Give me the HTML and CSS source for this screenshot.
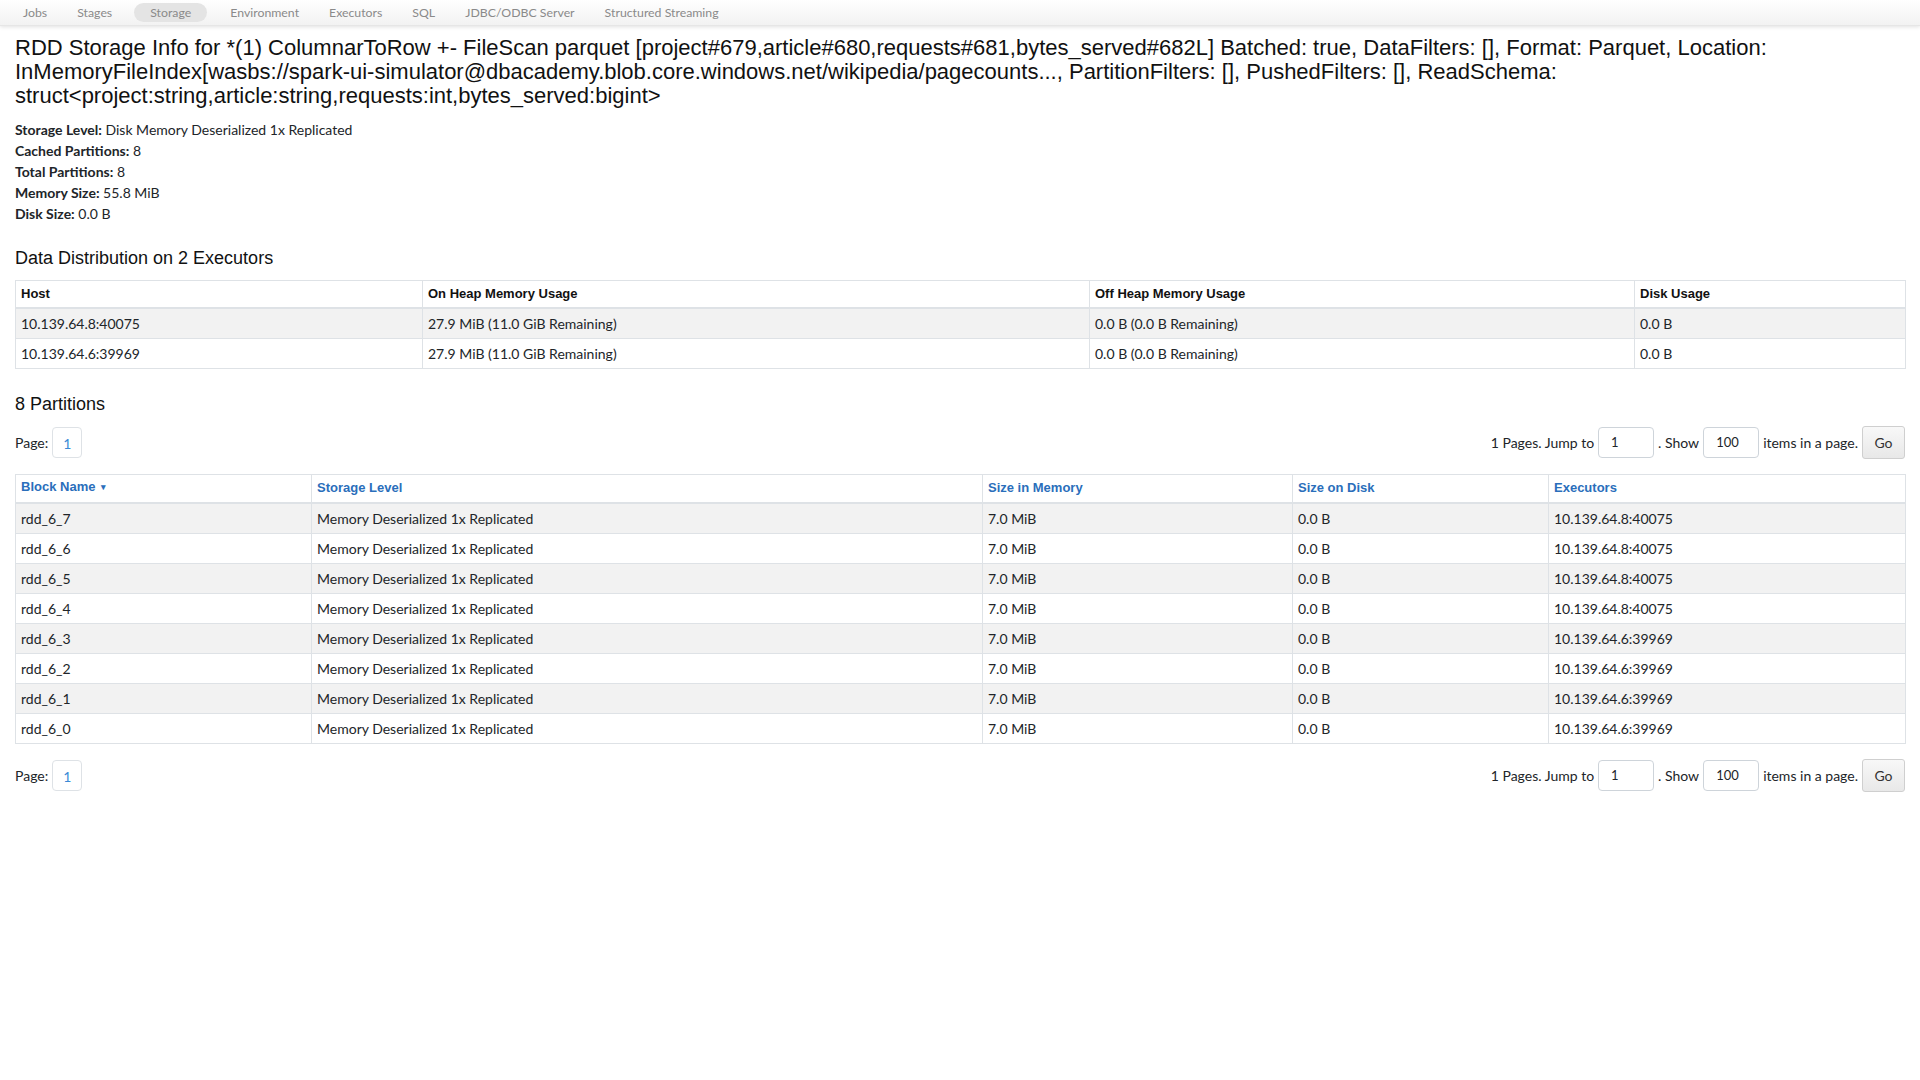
FILE: index.html
```html
<!DOCTYPE html>
<html>
<head>
<meta charset="utf-8">
<title>Storage</title>
<link rel="stylesheet" href="styles.css">
</head>
<body>
<nav class="navbar">
  <ul class="nav">
    <li class="nav-item">Jobs</li>
    <li class="nav-item">Stages</li>
    <li class="nav-item active">Storage</li>
    <li class="nav-item">Environment</li>
    <li class="nav-item">Executors</li>
    <li class="nav-item">SQL</li>
    <li class="nav-item">JDBC/ODBC Server</li>
    <li class="nav-item">Structured Streaming</li>
  </ul>
</nav>
<main class="container">
  <h3 class="title">RDD Storage Info for *(1) ColumnarToRow +- FileScan parquet [project#679,article#680,requests#681,bytes_served#682L] Batched: true, DataFilters: [], Format: Parquet, Location: InMemoryFileIndex[wasbs://spark-ui-simulator@dbacademy.blob.core.windows.net/wikipedia/pagecounts..., PartitionFilters: [], PushedFilters: [], ReadSchema: struct&lt;project:string,article:string,requests:int,bytes_served:bigint&gt;</h3>

  <ul class="summary">
    <li><strong>Storage Level:</strong> Disk Memory Deserialized 1x Replicated</li>
    <li><strong>Cached Partitions:</strong> 8</li>
    <li><strong>Total Partitions:</strong> 8</li>
    <li><strong>Memory Size:</strong> 55.8 MiB</li>
    <li><strong>Disk Size:</strong> 0.0 B</li>
  </ul>

  <h4 class="section-title">Data Distribution on 2 Executors</h4>
  <table class="table">
    <colgroup>
      <col class="w-host"><col class="w-onheap"><col class="w-offheap"><col class="w-disk">
    </colgroup>
    <thead>
      <tr><th>Host</th><th>On Heap Memory Usage</th><th>Off Heap Memory Usage</th><th>Disk Usage</th></tr>
    </thead>
    <tbody>
      <tr><td>10.139.64.8:40075</td><td>27.9 MiB (11.0 GiB Remaining)</td><td>0.0 B (0.0 B Remaining)</td><td>0.0 B</td></tr>
      <tr><td>10.139.64.6:39969</td><td>27.9 MiB (11.0 GiB Remaining)</td><td>0.0 B (0.0 B Remaining)</td><td>0.0 B</td></tr>
    </tbody>
  </table>

  <h4 class="section-title partitions-title">8 Partitions</h4>
  <div class="pager">
    <div class="pager-left"><span class="pager-label">Page:</span><span class="page-box">1</span></div>
    <div class="pager-right">
      <span>1 Pages. Jump to</span><span class="pager-input">1</span><span>. Show</span><span class="pager-input">100</span><span>items in a page.</span><span class="go-btn">Go</span>
    </div>
  </div>

  <table class="table blocks">
    <colgroup>
      <col class="w-b1"><col class="w-b2"><col class="w-b3"><col class="w-b4"><col class="w-b5">
    </colgroup>
    <thead>
      <tr><th><span class="link">Block Name <span class="caret">&#9662;</span></span></th><th><span class="link">Storage Level</span></th><th><span class="link">Size in Memory</span></th><th><span class="link">Size on Disk</span></th><th><span class="link">Executors</span></th></tr>
    </thead>
    <tbody>
      <tr><td>rdd_6_7</td><td>Memory Deserialized 1x Replicated</td><td>7.0 MiB</td><td>0.0 B</td><td>10.139.64.8:40075</td></tr>
      <tr><td>rdd_6_6</td><td>Memory Deserialized 1x Replicated</td><td>7.0 MiB</td><td>0.0 B</td><td>10.139.64.8:40075</td></tr>
      <tr><td>rdd_6_5</td><td>Memory Deserialized 1x Replicated</td><td>7.0 MiB</td><td>0.0 B</td><td>10.139.64.8:40075</td></tr>
      <tr><td>rdd_6_4</td><td>Memory Deserialized 1x Replicated</td><td>7.0 MiB</td><td>0.0 B</td><td>10.139.64.8:40075</td></tr>
      <tr><td>rdd_6_3</td><td>Memory Deserialized 1x Replicated</td><td>7.0 MiB</td><td>0.0 B</td><td>10.139.64.6:39969</td></tr>
      <tr><td>rdd_6_2</td><td>Memory Deserialized 1x Replicated</td><td>7.0 MiB</td><td>0.0 B</td><td>10.139.64.6:39969</td></tr>
      <tr><td>rdd_6_1</td><td>Memory Deserialized 1x Replicated</td><td>7.0 MiB</td><td>0.0 B</td><td>10.139.64.6:39969</td></tr>
      <tr><td>rdd_6_0</td><td>Memory Deserialized 1x Replicated</td><td>7.0 MiB</td><td>0.0 B</td><td>10.139.64.6:39969</td></tr>
    </tbody>
  </table>

  <div class="pager pager-bottom">
    <div class="pager-left"><span class="pager-label">Page:</span><span class="page-box">1</span></div>
    <div class="pager-right">
      <span>1 Pages. Jump to</span><span class="pager-input">1</span><span>. Show</span><span class="pager-input">100</span><span>items in a page.</span><span class="go-btn">Go</span>
    </div>
  </div>
</main>
</body>
</html>
```
FILE: styles.css
```css
* { box-sizing: border-box; }
html, body { margin: 0; padding: 0; background: #fff; }
body {
  font-family: Lato, "Open Sans", sans-serif;
  font-size: 14px;
  color: #212529;
}
.navbar {
  height: 26px;
  background: linear-gradient(#ffffff, #f2f2f2);
  box-shadow: 0 1px 4px rgba(0,0,0,0.12);
  border-bottom: 1px solid #e6e6e6;
}
.nav {
  list-style: none;
  margin: 0;
  padding: 3px 0 0 8px;
  display: flex;
  align-items: center;
}
.nav-item {
  padding: 0 15px;
  height: 19px;
  line-height: 19px;
  color: #8a8a8a;
  font-size: 12.3px;
}
.nav-item.active {
  background: #e4e4e4;
  border-radius: 10px;
  margin: 0 8px 0 7px;
  padding: 0 16px;
}
.container { padding: 0 15px; }
.title {
  font-family: "Liberation Sans", Arial, sans-serif;
  font-weight: normal;
  font-size: 22px;
  line-height: 24px;
  margin: 10px 0 11px;
  color: #111;
}
.summary {
  list-style: none;
  margin: 0;
  padding: 0;
}
.summary li {
  line-height: 21px;
  font-size: 14px;
}
.summary strong { font-weight: 700; }
.section-title {
  font-family: "Liberation Sans", Arial, sans-serif;
  font-weight: normal;
  font-size: 18px;
  line-height: 20px;
  margin: 24px 0 12px;
  color: #111;
}
.partitions-title { margin: 25px 0 12px; }
.table {
  width: 100%;
  border-collapse: collapse;
  border: 1px solid #dee2e6;
  table-layout: fixed;
}
.table th {
  font-family: "Liberation Sans", Arial, sans-serif;
  font-weight: bold;
  font-size: 13px;
  text-align: left;
  padding: 4px 5px;
  line-height: 18px;
  border: 1px solid #dee2e6;
  border-bottom: 2px solid #dee2e6;
  color: #111;
}
.table td {
  padding: 5px 5px;
  line-height: 19px;
  border: 1px solid #dee2e6;
  white-space: nowrap;
  font-size: 14px;
}
.table tbody tr:nth-child(odd) { background: #f2f2f2; }
.table th .link { color: #2a6ebb; }
.caret { font-size: 9px; position: relative; top: -1px; margin-left: 2px; }
.w-host { width: 407px; }
.w-onheap { width: 667px; }
.w-offheap { width: 545px; }
.w-disk { width: 271px; }
.w-b1 { width: 296px; }
.w-b2 { width: 671px; }
.w-b3 { width: 310px; }
.w-b4 { width: 256px; }
.w-b5 { width: 357px; }
.blocks th { padding: 3px 5px 5px; }
.pager {
  display: flex;
  justify-content: space-between;
  align-items: center;
  margin: 0 0 15px;
  height: 33px;
}
.pager-bottom { margin: 15px 0 0; }
.pager-left { display: flex; align-items: center; }
.pager-label { margin-right: 4px; }
.page-box {
  display: inline-block;
  width: 30px;
  height: 31px;
  line-height: 31px;
  text-align: center;
  border: 1px solid #dee2e6;
  border-radius: 4px;
  color: #3b8ad6;
}
.pager-right {
  display: flex;
  align-items: center;
  gap: 4px;
  font-size: 14px;
}
.pager-input {
  display: inline-block;
  width: 56px;
  height: 31px;
  line-height: 29px;
  padding-left: 12px;
  border: 1px solid #ced4da;
  border-radius: 4px;
  font-size: 13px;
}
.go-btn {
  display: inline-block;
  width: 43px;
  height: 33px;
  line-height: 31px;
  text-align: center;
  border: 1px solid #cfcfcf;
  border-radius: 3px;
  background: linear-gradient(#f8f8f8, #e8e8e8);
  font-size: 14px;
  color: #333;
}
```
